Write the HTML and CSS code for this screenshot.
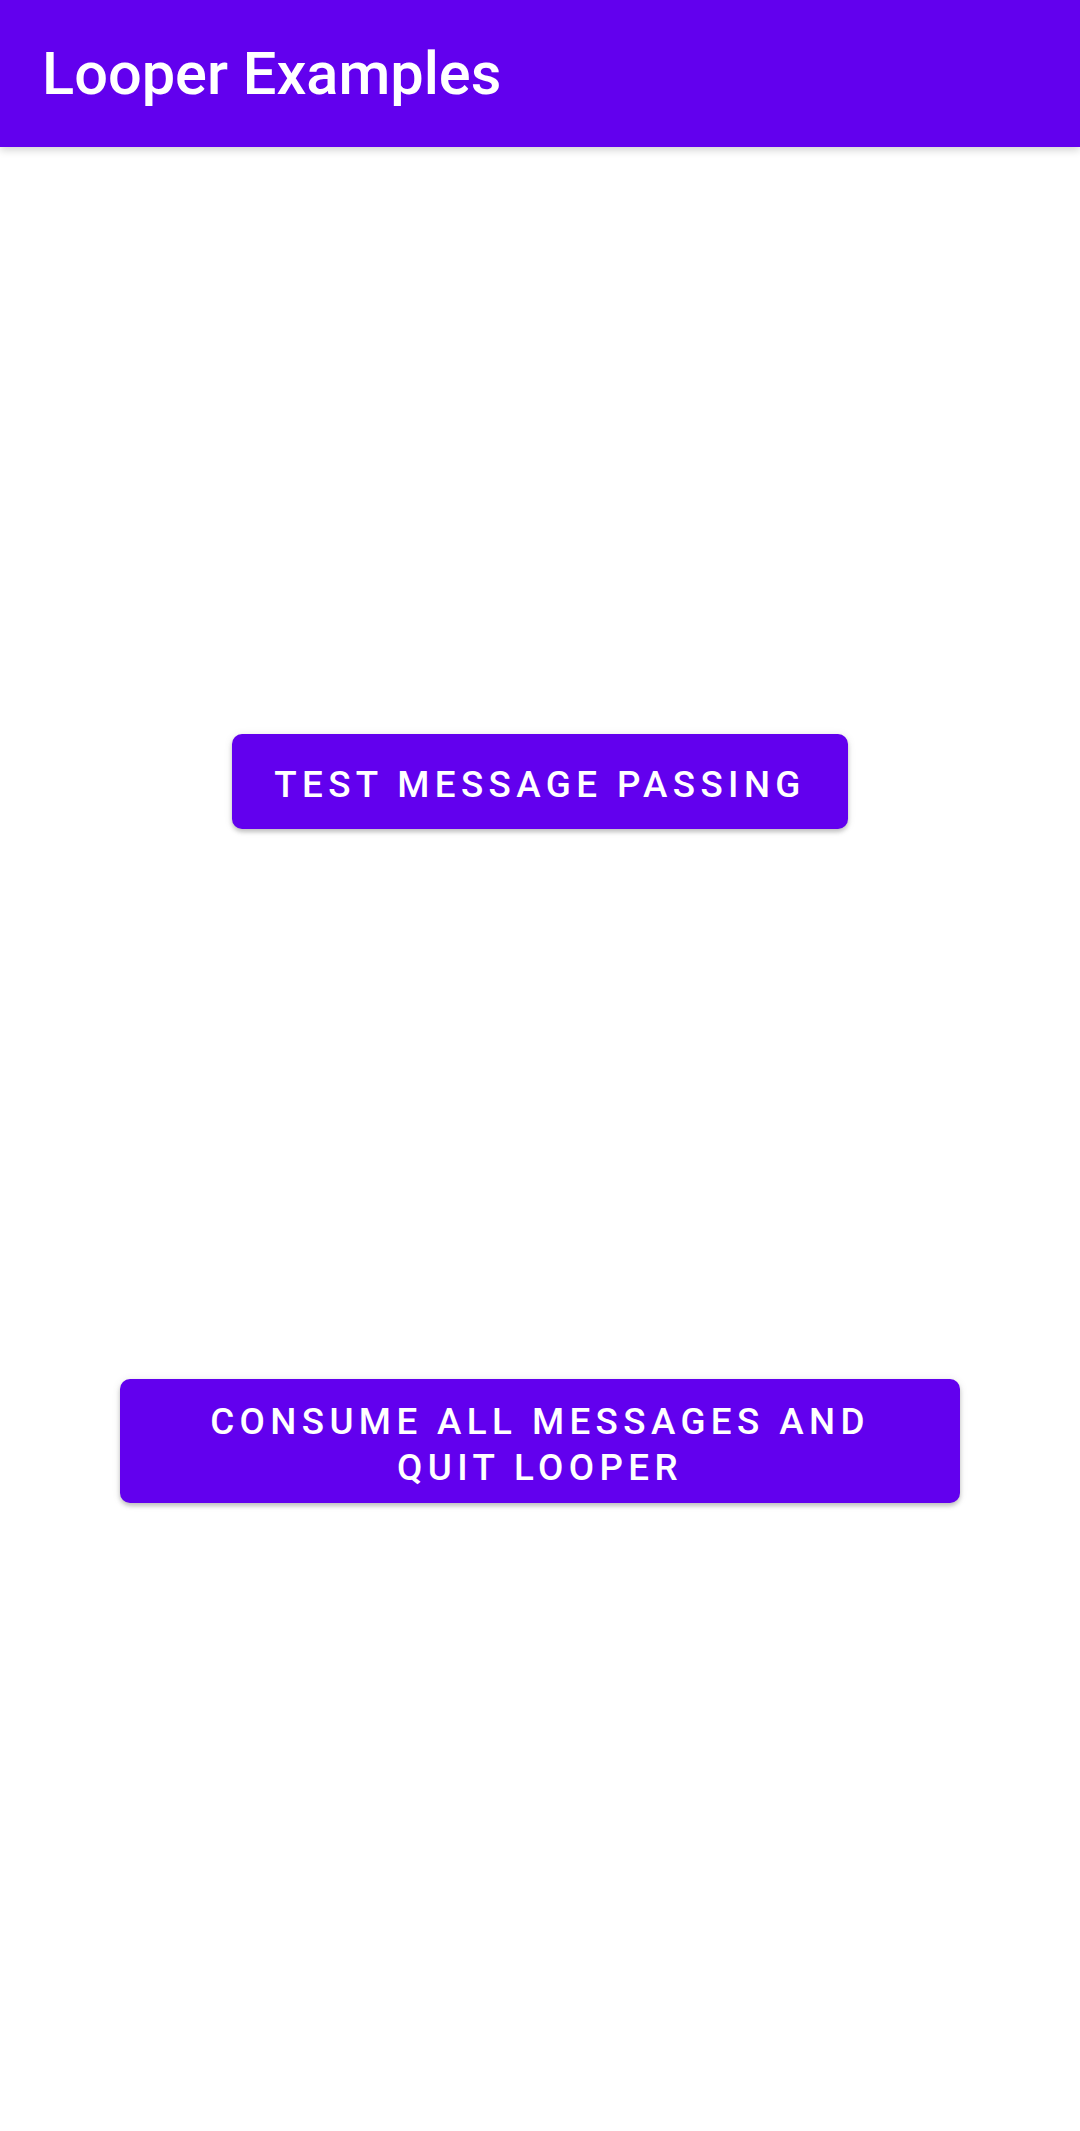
FILE: index.html
```html
<!DOCTYPE html>
<html>
<head>
<meta charset="utf-8">
<link rel="stylesheet" href="styles.css">
</head>
<body>
<header class="appbar">
  <h1 class="title">Looper Examples</h1>
</header>
<main class="content">
  <button class="btn btn-single">Test message passing</button>
  <button class="btn btn-double">Consume all messages and quit looper</button>
</main>
</body>
</html>
```
FILE: styles.css
```css
html, body {
  margin: 0;
  padding: 0;
  background: #ffffff;
}
body {
  width: 1080px;
  height: 2131px;
  overflow: hidden;
  font-family: Roboto, "Noto Sans", sans-serif;
}
.appbar {
  height: 147px;
  background: #6200ee;
  display: flex;
  align-items: center;
  padding: 0 0 0 42px;
  box-shadow: 0 3px 8px rgba(0, 0, 0, 0.18);
  position: relative;
  z-index: 1;
}
.title {
  margin: 0;
  color: #ffffff;
  font-family: Roboto, sans-serif;
  font-weight: 500;
  font-size: 59.5px;
  line-height: 1;
  padding-top: 2px;
}
.content {
  display: flex;
  flex-direction: column;
  align-items: center;
  padding-top: 587px;
}
.btn {
  background: #6200ee;
  color: #ffffff;
  border: none;
  border-radius: 10px;
  font-family: Roboto, sans-serif;
  font-weight: 500;
  font-size: 36.75px;
  letter-spacing: 5.4px;
  text-transform: uppercase;
  box-shadow: 0 3px 4px rgba(0, 0, 0, 0.2), 0 1px 8px rgba(0, 0, 0, 0.1);
  text-align: center;
  margin: 0;
}
.btn-single {
  height: 95px;
  padding: 8px 42px 0;
  line-height: 1;
}
.btn-double {
  margin-top: 550px;
  width: 840px;
  height: 124px;
  padding: 8px 80px 0;
  line-height: 46px;
}
```
